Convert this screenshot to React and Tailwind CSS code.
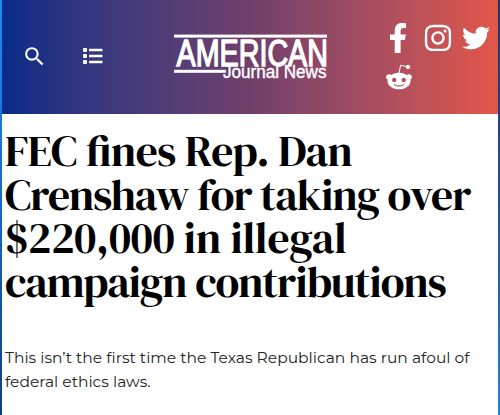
import { FaFacebookF, FaInstagram, FaTwitter, FaRedditAlien } from "react-icons/fa";
import { MdSearch } from "react-icons/md";

function ListIcon() {
  return (
    <svg width="20" height="17" viewBox="0 0 20 17" fill="#fff">
      {[0, 6, 12].map((y) => (
        <g key={y}>
          <rect x="0" y={y} width="4" height="4" rx="1" />
          <rect x="6" y={y + 0.8} width="13.5" height="2.5" rx="0.6" />
        </g>
      ))}
    </svg>
  );
}

function Logo() {
  return (
    <svg className="block overflow-visible" width="156" height="56" viewBox="0 0 156 56" fill="#fff">
      <rect x="1" y="4.6" width="153" height="3" />
      <rect x="1" y="39.8" width="52" height="3" />
      <text x="3.5" y="35.5" fontFamily="'Liberation Sans', Arial, sans-serif" fontSize="36" stroke="#fff" strokeWidth="1.4" textLength="151.5" lengthAdjust="spacingAndGlyphs">AMERICAN</text>
      <text x="50" y="47.5" fontFamily="'Liberation Sans', Arial, sans-serif" fontSize="17.5" textLength="103.5" lengthAdjust="spacingAndGlyphs" stroke="#fff" strokeWidth="0.4">Journal News</text>
    </svg>
  );
}

export default function App() {
  return (
    <div className="flex h-[415px] w-[500px] overflow-hidden bg-white">
      <div className="w-[2px] shrink-0 bg-linear-to-b from-[#1c8df0] via-[#1668c8] to-[#0d3f86]" />
      <main className="w-[496px] shrink-0">
        <header className="flex h-[114px] bg-linear-to-r from-[#052b88] via-[#703f6c] to-[#e25648] text-white">
          <div className="flex w-[171px] pl-[20px] pt-[44px]">
            <MdSearch size={25} />
            <div className="ml-[36px] pt-[4px]">
              <ListIcon />
            </div>
          </div>
          <div className="w-[210px] pt-[30px]">
            <Logo />
          </div>
          <div className="pt-[23px]">
            <div className="flex h-[30px] items-center">
              <FaFacebookF size={30} />
              <FaInstagram size={30} className="ml-[10px]" />
              <FaTwitter size={28} className="ml-[9px]" />
            </div>
            <FaRedditAlien size={28} className="mt-[10px] ml-[2px]" />
          </div>
        </header>
        <h1 className="pt-[16px] pl-[3px] font-['DM_Serif_Display','Liberation_Serif',serif] text-[43.5px] leading-[43.7px] font-normal tracking-[-0.9px] whitespace-nowrap text-black [font-feature-settings:'liga'_1]">
          <span className="block tracking-[-0.38px]">FEC fines Rep. Dan</span>
          <span className="block">Crenshaw for taking over</span>
          <span className="block tracking-[-0.05px]">$220,000 in illegal</span>
          <span className="block">campaign contributions</span>
        </h1>
        <p className="pt-[41.5px] pl-[3px] font-[Montserrat,Lato,sans-serif] text-[15.5px] leading-[24px] whitespace-nowrap text-[#222]">
          <span className="block tracking-[0.01px]">This isn’t the first time the Texas Republican has run afoul of</span>
          <span className="block">federal ethics laws.</span>
        </p>
      </main>
      <div className="w-[2px] shrink-0 bg-linear-to-b from-[#1c3470] via-[#1f4f9c] to-[#1c86d8]" />
    </div>
  );
}
